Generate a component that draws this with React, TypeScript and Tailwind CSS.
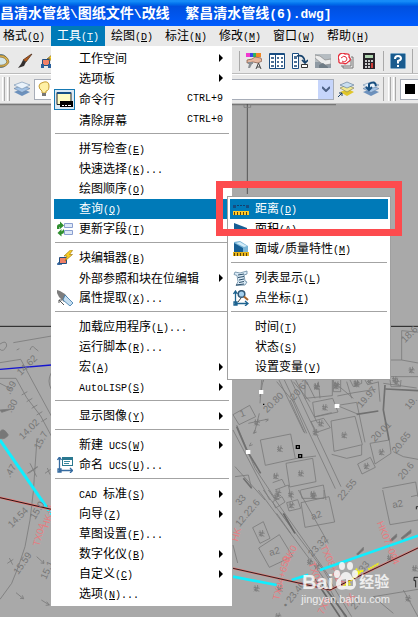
import type { ReactNode } from "react";

/** Latin runs are set in a half-width monospace face, Chinese in the CJK face. */
function Mixed({ text, latin }: { text: string; latin: string }) {
  return (
    <>
      {text.split(/([\x20-\x7e]+)/).map((run, i) =>
        /^[\x20-\x7e]+$/.test(run) ? (
          <span key={i} className={latin}>{run}</span>
        ) : (
          run
        ),
      )}
    </>
  );
}

const mono = "font-['Liberation_Mono',monospace] text-[10px]";

function Label({ text, hot, tail = "" }: { text: string; hot?: string; tail?: string }) {
  return (
    <span className="whitespace-pre">
      <Mixed text={text} latin={mono} />
      {hot && (
        <span className={mono}>
          (<u className="underline-offset-1">{hot}</u>){tail}
        </span>
      )}
    </span>
  );
}

function Icon({ children, label }: { children: ReactNode; label?: string }) {
  return (
    <svg viewBox="0 0 16 16" className="size-4 shrink-0" role={label ? "img" : undefined} aria-label={label} aria-hidden={label ? undefined : true}>
      {children}
    </svg>
  );
}

const icons: Record<string, ReactNode> = {
  field: (
    <>
      <path d="M7.500 2.500h8v4h-8zM7.500 9.500h8v4h-8z" fill="#dfe9f8" stroke="#8a9fd0" />
      <path d="M0 8V5.500q0-2.500 3-2.500V.500l4 4-4 3.500V6H2.500V8zM7 8v2.500q0 2.500-2.500 2.500v2.500L.5 12l4-4v2.500" fill="#2f8f2f" />
    </>
  ),
  block: (
    <>
      <path d="M2 12v3M0 14h5" stroke="#2a5f9a" strokeWidth="1.500" />
      <path d="M2.500 7.500h7v6h-7z" fill="#f08068" stroke="#234f80" />
      <path d="M13.500 0 7 6h3l-2 5 7.500-6.500h-3l3-4z" fill="#f8cf22" stroke="#a07818" strokeWidth=".7" />
    </>
  ),
  extract: (
    <>
      <path d="M0 0 3 1l5 3 3 4-4 4-5-5-2-4z" fill="#7d7d7d" />
      <path d="m8 5 8 8-3 3-7-6z" fill="#c5def0" stroke="#3876a8" strokeWidth=".8" />
      <path d="m7 15-5-5M2 13v-3h3" stroke="#555" fill="none" />
    </>
  ),
  ucs: (
    <>
      <path d="M5 0h11v9H5z" fill="#2a7890" />
      <path d="M6 3h9v5H6z" fill="#fff" />
      <path d="M7 4.500h6M7 6.500h5" stroke="#3b8ba0" />
      <path d="M2.500 1v12.500H15M.5 3l2-3 2 3M13 11l2.500 2.500L13 16M1 12h3v3H1z" fill="none" stroke="#356ba0" strokeWidth="1.300" />
    </>
  ),
  distance: (
    <>
      <path d="M0 4h3v3H0zM13 4h3v3h-3z" fill="#164c80" />
      <path d="M4 4.500h8" stroke="#123f6c" strokeDasharray="2 1" />
      <path d="M0 10h16v4H0z" fill="#ffc928" />
      <path d="M1.500 11v3M4.500 11v3M7.500 11v3M10.500 11v3M13.500 11v3" stroke="#5a4310" />
    </>
  ),
  area: <path d="M1 2 14 7v8H1z" fill="#165e94" />,
  mass: (
    <>
      <path d="m1 1 6-1 8 5v6l-4 1L1 9z" fill="#79b4d6" />
      <path d="m1 2 9 5v4H1z" fill="#165e94" />
      <path d="m7 1 7 4-3 1-8-4z" fill="#d2ebf8" />
      <path d="M0 11h16v4H0z" fill="#e8b51c" />
      <path d="M1.500 12v3M4.500 12v3M7.500 12v3M10.500 12v3M13.500 12v3" stroke="#58440e" />
    </>
  ),
  list: (
    <>
      <path d="m2 2 5 1 7-2v3l-3 1 1 6 2 1-2 3-9 .5 2-4-1-6-3-1z" fill="#dcecf7" stroke="#6487a0" strokeWidth=".8" />
      <path d="m5 5 6-1M5 7.500l6-1M6 10l5-1M6 12.500l5-1M3 15l8-1" stroke="#2b4d68" />
    </>
  ),
  point: (
    <>
      <path d="M2.500 2v11.500H14M.5 4l2-3 2 3M12 11l3 2.500L12 16M1 12h3v3H1z" fill="none" stroke="#1e6390" strokeWidth="1.300" />
      <circle cx="8.500" cy="4" r="3.300" fill="#a5d0ee" stroke="#345a78" strokeWidth="1.500" />
      <path d="m11 6.500 4 3.500" stroke="#a8652d" strokeWidth="2" />
      <path d="m8 8-3 4" stroke="#444" />
    </>
  ),
};

function CommandLineIcon() {
  return (
    <span className="flex size-[21px] -ml-[3px] shrink-0 items-center justify-center border border-[#1679b3] bg-[#dceaf4]">
      <svg viewBox="0 0 17 17" className="size-[17px]" aria-hidden="true">
        <path d="M1 1.500h14v12H1z" fill="#fffcc5" stroke="#222" />
        <path d="M1 1h14v2H1z" fill="#164f86" />
        <path d="M4 10h13v6H4z" fill="#000" />
        <path d="M6 14.500h2M9 14.500h2M12 14.500h3" stroke="#fff" />
      </svg>
    </span>
  );
}

type Item = { text: string; hot?: string; tail?: string; icon?: string; keys?: string; sub?: boolean; active?: boolean; checked?: boolean };

const toolGroups: Item[][] = [
  [
    { text: "工作空间", sub: true },
    { text: "选项板", sub: true },
    { text: "命令行", keys: "CTRL+9", checked: true },
    { text: "清除屏幕", keys: "CTRL+0" },
  ],
  [
    { text: "拼写检查", hot: "E" },
    { text: "快速选择", hot: "K", tail: "..." },
    { text: "绘图顺序", hot: "O" },
    { text: "查询", hot: "Q", sub: true, active: true },
    { text: "更新字段", hot: "T", icon: "field" },
  ],
  [
    { text: "块编辑器", hot: "B", icon: "block" },
    { text: "外部参照和块在位编辑", sub: true },
    { text: "属性提取", hot: "X", tail: "...", icon: "extract" },
  ],
  [
    { text: "加载应用程序", hot: "L", tail: "..." },
    { text: "运行脚本", hot: "R", tail: "..." },
    { text: "宏", hot: "A", sub: true },
    { text: "AutoLISP", hot: "S", sub: true },
  ],
  [{ text: "显示图像", hot: "Y", sub: true }],
  [
    { text: "新建 UCS", hot: "W", sub: true },
    { text: "命名 UCS", hot: "U", tail: "...", icon: "ucs" },
  ],
  [
    { text: "CAD 标准", hot: "S", sub: true },
    { text: "向导", hot: "Z", sub: true },
    { text: "草图设置", hot: "F", tail: "..." },
    { text: "数字化仪", hot: "B", sub: true },
    { text: "自定义", hot: "C", sub: true },
    { text: "选项", hot: "N", tail: "..." },
  ],
];

const inquiryGroups: Item[][] = [
  [
    { text: "距离", hot: "D", icon: "distance", active: true },
    { text: "面积", hot: "A", icon: "area" },
    { text: "面域/质量特性", hot: "M", icon: "mass" },
  ],
  [
    { text: "列表显示", hot: "L", icon: "list" },
    { text: "点坐标", hot: "I", icon: "point" },
  ],
  [
    { text: "时间", hot: "T" },
    { text: "状态", hot: "S" },
    { text: "设置变量", hot: "V" },
  ],
];

function Row({ item }: { item: Item }) {
  return (
    <button
      type="button"
      role="menuitem"
      className={`flex w-full items-center pl-[3px] pr-[7px] text-left ${item.checked ? "h-[22px]" : "h-5"} ${item.active ? "bg-[#007ab8] text-white" : "text-black"}`}
    >
      <span className="flex w-[22px] shrink-0 items-center">
        {item.checked ? <CommandLineIcon /> : item.icon ? <Icon>{icons[item.icon]}</Icon> : null}
      </span>
      <Label text={item.text} hot={item.hot} tail={item.tail} />
      {item.keys && <span className={`ml-auto ${mono}`}>{item.keys}</span>}
      {item.sub && (
        <svg viewBox="0 0 4 8" className="ml-auto h-2 w-1" aria-hidden="true">
          <path d="M0 0v8l4-4z" fill="currentColor" />
        </svg>
      )}
    </button>
  );
}

function Groups({ groups }: { groups: Item[][] }) {
  return (
    <>
      {groups.map((group, i) => (
        <div key={i}>
          {i > 0 && <hr className="mx-px mt-[3px] mb-[5px] border-[#a3a3a3]" />}
          {group.map((item) => (
            <Row key={item.text} item={item} />
          ))}
        </div>
      ))}
    </>
  );
}

const menuTitles = [
  ["格式", "O"],
  ["工具", "T"],
  ["绘图", "D"],
  ["标注", "N"],
  ["修改", "M"],
  ["窗口", "W"],
  ["帮助", "H"],
];

function MenuBar() {
  return (
    <nav className="-ml-[3px] flex h-5 bg-[#e9e9e9]" role="menubar">
      {menuTitles.map(([text, hot]) => (
        <div key={text} className="relative">
          <button type="button" role="menuitem" className={`flex h-5 w-[54px] items-center pl-1.5 ${hot === "T" ? "bg-[#007ab8] text-white" : ""}`}>
            <Label text={text} hot={hot} />
          </button>
          {hot === "T" && (
            <div role="menu" aria-label="工具" className="absolute top-full left-0 z-10 w-[181px] bg-white py-0.5 pr-0.5 pl-[3px]">
              <Groups groups={toolGroups} />
              <div role="menu" aria-label="查询" className="absolute top-[150px] left-[176px] w-[164px] border border-[#a0a0a0] bg-white p-0.5">
                <Groups groups={inquiryGroups} />
                <div className="pointer-events-none absolute -top-4 -left-3 h-[55px] w-[186px] border-[7px] border-[#fd4b4e]" />
              </div>
            </div>
          )}
        </div>
      ))}
    </nav>
  );
}

const layers = (
  <>
    <path d="m0 11 8-3 8 3-8 4z" fill="#6c91bd" />
    <path d="m0 7.500 8-3 8 3-8 4z" fill="#a4c3e6" stroke="#64809f" strokeWidth=".6" />
    <path d="m0 4 8-3 8 3-8 4z" fill="#eaf3fb" stroke="#6c8cad" strokeWidth=".6" />
  </>
);

function ToolButton({ label, children }: { label: string; children: ReactNode }) {
  return (
    <button type="button" aria-label={label} className="shrink-0">
      <Icon>{children}</Icon>
    </button>
  );
}

function Grip() {
  return (
    <span className="flex gap-0.5">
      <i className="h-6 w-[3px] border-x border-l-white border-r-[#a9a9a9]" />
      <i className="h-6 w-[3px] border-x border-l-white border-r-[#a9a9a9]" />
    </span>
  );
}

function StandardBar() {
  return (
    <div className="flex h-7 items-center overflow-hidden border-t border-white bg-[#e9e9e9] shadow-[inset_0_-1px_0_#bcbcbc]">
      <div className="-ml-1.5 flex w-[245px] shrink-0 items-center gap-[7px]">
        <ToolButton label="浏览">
          <circle cx="7" cy="8" r="6.500" fill="#d5e6e8" stroke="#66849c" />
          <path d="M5 2q9 0 10 7-2 5-9 5l-2-2q7 1 9-3-1-5-8-5z" fill="#e0b44c" stroke="#6d5623" strokeWidth=".6" />
        </ToolButton>
        <ToolButton label="特性匹配">
          <path d="m15 1-6 8-3-2 7-5z" fill="#b35b1e" stroke="#432715" strokeWidth=".7" />
          <path d="m6 7 3 2-2 4-6 2 3-4z" fill="#34302f" />
        </ToolButton>
        <ToolButton label="块编辑器">
          <path d="M2.500 6.500h7v6h-7z" fill="#f08068" stroke="#234f80" />
          <path d="M1 11h3v4H1zM8 11h3v4H8z" fill="#2a5f9a" />
          <path d="m14 0-7 6 3-1-1 3 6-4z" fill="#f8cf22" stroke="#775b1a" strokeWidth=".7" />
        </ToolButton>
      </div>
      <i className="mr-1.5 h-5 w-px shrink-0 bg-[#a9a9a9]" />
      <div className="flex shrink-0 items-center gap-[7px]">
        <ToolButton label="特性">
          <path d="M0 0h4v4H0z" fill="#f03ad0" />
          <path d="M4 0h3v4H4z" fill="#3c46e8" />
          <path d="M7 0h3v4H7z" fill="#2ab560" />
          <path d="M10 0h5v4h-5z" fill="#ef8826" />
          <path d="m1 7 5-1 3-2 6 1 1 3-4 2-5-1-6 1z" fill="#e5b7a0" stroke="#7d5444" strokeWidth=".7" />
          <path d="M2 9h5v2H2zM3 11h3l-2 4H2z" fill="#8b8f94" />
          <path d="m10 16 2.500-6 2.500 6M11 14h3" fill="none" stroke="#444" />
        </ToolButton>
        <ToolButton label="设计中心">
          <path d="M.5.500h15v15H.5z" fill="#fff" stroke="#194c80" />
          <path d="M6.500 1v14M1 1.500h14" stroke="#194c80" />
          <path d="M2 4h3v2H2zM2 8h3v2H2zM2 12h3v2H2zM8 4h2v2H8zM12 4h2v2h-2zM8 8h2v2H8zM12 8h2v2h-2zM8 12h2v2H8zM12 12h2v2h-2z" fill="#4e7095" />
        </ToolButton>
        <ToolButton label="工具选项板">
          <path d="M.5.500h6v15h-6z" fill="#fff" stroke="#194c80" />
          <path d="M2 3h3v3H2zM2 8h3v2H2zM2 12h3v2H2z" fill="#4e7095" />
          <path d="M5 3q7-2 8 6m-3-2 3 3 3-3" fill="none" stroke="#16426c" strokeWidth="1.600" />
          <path d="M9.500 11.500h6v3h-6z" fill="#fff" stroke="#333" />
        </ToolButton>
        <ToolButton label="图纸集">
          <path d="M0 1h16v14H0z" fill="#b5bcc1" />
          <path d="M0 9h16v6H0z" fill="#8f9aa4" />
          <path d="m0 2 5 1 5 4 6-1v5l-6 1-4-2-6-5z" fill="#ececec" stroke="#888" strokeWidth=".7" />
          <path d="m4 12 4-2 5 4v1H4z" fill="#6f7c86" />
        </ToolButton>
        <ToolButton label="标记集">
          <path d="M13 4h2v11H5v-2M11 6h2v7H3" fill="none" stroke="#777" />
          <path d="M2 1q3-2 5 0 5-1 4 3 3 3-1 5-2 3-5 1-5 1-4-3-2-3 1-6z" fill="#fff" stroke="#e52e3b" strokeWidth="1.300" />
          <path d="M3 5q3-3 5-1t0 4-4 0" fill="none" stroke="#e52e3b" />
        </ToolButton>
        <ToolButton label="计算器">
          <path d="M2 0h12v16H2z" fill="#27242a" />
          <path d="M4 2h8v3H4z" fill="#afd4af" />
          <path d="M4 8h8M4 11h8M4 14h8" stroke="#fff" strokeWidth="1.500" strokeDasharray="2 1" />
          <path d="M10 10h2v5h-2z" fill="#ce3c38" />
        </ToolButton>
      </div>
      <i className="mx-1.5 h-5 w-px shrink-0 bg-[#a9a9a9]" />
      <ToolButton label="帮助">
        <rect x=".5" y=".5" width="15" height="15" rx="1" fill="#195b8e" stroke="#7ba7c7" />
        <path d="M5 6q0-3 3-3t3 2.500Q11 7 8 8v2.500M8 12v2" fill="none" stroke="#fff" strokeWidth="2" />
      </ToolButton>
      <i className="ml-1.5 h-6 w-px shrink-0 bg-[#a9a9a9]" />
    </div>
  );
}

function LayerBar() {
  return (
    <div className="flex h-[30px] items-center overflow-hidden border-t border-b border-t-white border-b-[#bcbcbc] bg-[#e9e9e9] pl-0.5">
      <Grip />
      <div className="ml-1 flex shrink-0 items-center gap-1">
        <ToolButton label="图层特性">{layers}</ToolButton>
        <div className="relative w-[300px]">
          <select aria-label="图层" className="block h-[21px] w-full appearance-none border border-[#a7adb8] bg-white pl-5">
            <option></option>
          </select>
          <svg viewBox="0 0 12 16" className="pointer-events-none absolute top-0.5 left-1 h-4 w-3" aria-hidden="true">
            <path d="M4 10Q1 8 1 5t5-4 5 4-3 5v2H4z" fill="#fff1a5" stroke="#c49b31" />
            <path d="M4 12h4v3H4z" fill="#777" />
          </svg>
          <span className="pointer-events-none absolute top-px right-px flex h-[19px] w-[15px] items-center justify-center bg-[#c6d5fb]">
            <svg viewBox="0 0 8 6" className="h-1.5 w-2" aria-hidden="true">
              <path d="m0 1 4 4 4-4" fill="none" stroke="#4d6185" strokeWidth="2" />
            </svg>
          </span>
        </div>
        <ToolButton label="置为当前图层">
          <path d="m2 11 8-3 6 3-7 4z" fill="#e0c62b" />
          <path d="m2 7 7-3 7 3-7 4z" fill="#f1e891" stroke="#7a7750" strokeWidth=".6" />
          <path d="m2 4 7-3 7 3-7 3z" fill="#c9def0" stroke="#587491" strokeWidth=".6" />
          <path d="m0 16 4-4M1 12h3v3" fill="none" stroke="#183f69" />
        </ToolButton>
        <span className="w-px" />
        <ToolButton label="上一个图层">
          {layers}
          <path d="M13 5q-1-6-7-2v5M3 6l3 3 3-3" fill="none" stroke="#184f80" strokeWidth="2" />
        </ToolButton>
      </div>
      <i className="mx-1 h-6 w-px shrink-0 bg-[#a9a9a9]" />
      <Grip />
      <button type="button" aria-label="颜色" className="ml-1 flex h-[21px] flex-1 items-center border border-r-0 border-[#a7adb8] bg-white pl-1">
        <i className="size-2.5 bg-black" />
      </button>
    </div>
  );
}

type Mark = [x: number, y: number, angle: number, text: string];

function Marks({ marks, className }: { marks: Mark[]; className: string }) {
  return (
    <g className={className} stroke="none">
      {marks.map(([x, y, angle, text], i) => (
        <text key={i} transform={`translate(${x} ${y}) rotate(${angle})`}>{text}</text>
      ))}
    </g>
  );
}

/* Survey symbol standing for a building. */
function House({ x, y }: { x: number; y: number }) {
  return <path d={`M${x - 9} ${y - 3}l18 3m-14-9l2 18m6-19l-3 20m-9-8l17 7m-2-14l-14 14`} />;
}

const grey = "fill-[#777] text-[29px] font-['Liberation_Sans',sans-serif]";
const pink = "fill-[#e77b80] text-[29px] font-['Liberation_Sans',sans-serif]";

/* Site plan drawn in thirds of a pixel. */
function SitePlan() {
  return (
    <svg viewBox="0 312 1254 1539" preserveAspectRatio="xMinYMin slice" className="absolute inset-0 size-full" role="img" aria-label="管线图">
      <g fill="none" stroke="#7b7b7b" strokeWidth="2.500">
        <path d="M0 313h1008" stroke="#777" strokeWidth="6" />
        <path d="M742 312v270" stroke="#444" />
        <path d="M732 312v10h20v-10" />
        <path d="M0 979h156M1170 979h84" stroke="#000" />

        <g transform="translate(0 1050)">
          <path d="M0 38 62 28l92 170M0 85h48l32 58 42 55 32 60M111 265l-11 160-10 85-15 80-20 60-20 50-35 48M0 100l35 18M65 135l17-10M80 155l17-10M95 175l17-10M110 195l17-10M124 215l17-10M154 68q-14 25 0 50M40-22l115-20M0-18q20-14 20 6-10 20-20 10M50 0l8-4M90 0q5-18 15-5l10 8" />
          <path d="m110 620 22 20m-2-10 2 10-10-1M48 728l22 18m-3-10 4 10-11-1M124 750l24 15m-8-10 8 10-11 1M82 370l30-20m-22-10 20 40m-24-10 28-20M22 640l18-12m-12-4 10 20M135 370l17-12m-10-4 8 20" />
          <path d="M0 245q10-15 25 10-10 15-25 10zM0 180l35-3-30 10z" fill="#777" />
          <path d="M0 58 154 45" stroke="#1515d0" strokeWidth="4" />
          <path d="m0 270 154 222" stroke="#10efff" strokeWidth="9" />
          <path d="m0 443 154 35" stroke="#ed7773" strokeWidth="7" />
          <path d="m0 443 154 35" stroke="#000" />
          <Marks className={grey} marks={[[62, 78, -45, "14.62"], [68, 270, -45, "14.02"], [118, 300, -62, "15.7"], [35, 535, -45, "14.54"], [55, 675, -55, "15.59"], [105, 510, -58, "15.0"], [138, 690, -65, "15.1"], [30, 385, -60, ".47"], [30, 135, -60, ".69"], [34, 190, -60, ".30"]]} />
          <Marks className={pink} marks={[[118, 590, -75, "TX04"], [145, 535, -75, "HK+1"]]} />
        </g>

        <g transform="translate(630 780)">
          <path d="M540 350v-50h35v-88l55 5M575 300l55 10M540 350h90M200 365l50 60M250 365l50 60M290 365l25 50M325 365l5 50M370 365l60 50M410 365l15 50M505 365l5 60M150 410q15-80 10-45" />
          <House x={605} y={330} />
          <House x={555} y={358} />
          <House x={320} y={378} />
          <House x={378} y={378} />
          <House x={440} y={372} />
          <Marks className={grey} marks={[[585, 250, -45, "18.6"]]} />
        </g>

        <g transform="translate(675 1140)">
          <path d="m162 0 75 157M178 0l153 326M198 0l150 320M212 0l66 130M195 60l45 100M200 55l45 105" />
          <path d="m106 180 91-18 14 74-90 20zM183 250l80-15 10 70-79 16zM211 236l62-8M24 104l50-28 18 34-50 24zM35 135l55 130 60 90M24 150l110 210M30 260l90 100" />
          <path d="m240 55 82-8V0M240 55V0M263 67l60-12 16 41-70 15zM270 110l50-12M258 125l38-10 20 28-41 14zM318 123l72-14 22 85-85 20zM345 75l50-8 25 120M320 223l45 12 45-10v-30M337 48l50-10 65-10M475 10l100 14M435 190l58-10 5 40-48 32zM398 252l38-20 15 30-40 20zM505 215l30 15 44 8M472 325l100-19 7 45M227 330l68-15 8 45M150 330l40-15 10 45M143 308l28-10 10 20M30 290l40-5 10 40M110 0l-5 70M70 130l60-13M88 160l15-60" />
          <path d="M395 103l65-10M480 15l-5 75 17 90M482 27l97 5M35 140l30 70 42 70M55 295l25 30" stroke="#707070" strokeWidth="5" />
          <path d="M340 78l60 25M120 118l10 2-8 5M90 150l-5 10 10-4M78 188l-5 10 10-4" />
          <path d="M325 0v35h22V0M375 0l10 20 25-10V0M420 0l8 14 32-8M495 0l3 20h28l2-20" />
          {[[276, 20], [336, 14], [395, 8], [435, 2], [300, 82], [288, 130], [272, 157], [358, 165], [165, 206], [228, 280], [470, 216], [425, 258], [153, 288], [160, 338], [198, 343], [267, 348], [515, 5], [96, 127]].map(([x, y]) => (
            <House key={`${x}-${y}`} x={x} y={y} />
          ))}
          <path d="M214 197h9v8h-9zM221 224h9v8h-9z" stroke="#000" strokeWidth="4" />
          <path d="M102 30h13v12h-13zM63 210h13v12H63zM329 72h14v12h-14z" fill="#fff" stroke="none" />
          <path d="M114 71h4v4h-4z" fill="#000" stroke="none" />
          <Marks className={grey} marks={[[126, 100, -45, "20.80"], [208, 62, -50, "20.67"], [409, 85, -50, "19.97"], [449, 187, -45, "20.01"], [514, 222, -52, "20.65"], [532, 300, -50, "20.6"], [350, 363, -50, "22.55"], [552, 90, -50, "19."], [48, 112, -20, "1"]]} />
        </g>

        <g transform="translate(675 1470)">
          <path d="m100 0 200 270 60 111M115 0l180 240 85 140M130 0l190 270M165 65l45 65M155 70l42 60M220 0l90 160" />
          <path d="m228 38 84-18 17 76-89 16zM185 38l33-9 9 26-35 8zM83 113l32-18 20 50-30 15zM101 174l62-40 40 65-70 33zM473 0l22 104 84-14M558 20l21-5M225 0l6 25h66V0M24 165l14 54M445 320l60 50M535 300l44 80M445 320l134-22M143 35l28-15 9 16-28 18z" />
          <path d="M175 70l35 60M265 260l80 121M290 280l75 101" stroke="#686868" strokeWidth="5" />
          {[[200, 45], [264, 12], [110, 130], [155, 20], [95, 295], [165, 295], [255, 215], [278, 228], [495, 203], [570, 235], [550, 325], [160, 378]].map(([x, y]) => (
            <House key={`${x}-${y}`} x={x} y={y} />
          ))}
          <path d="m395 192 20-20v9l-17 14zM495 150l20-18v9l-17 15zM528 144l30-25v10l-27 19z" fill="#727272" />
          <Marks className={grey} marks={[[262, 202, -48, "23.32"], [186, 355, -52, "• 23.40"], [44, 112, -50, "12.22.6"], [44, 48, -50, "33"], [262, 90, -20, "a2"], [135, 198, -15, "a2"], [504, 55, -12, "a2"], [390, 360, -50, "27"], [414, 248, -50, "33"]]} />
          <Marks className={pink} marks={[[38, 155, -75, "HK"], [162, 332, -76, "TX04+650"], [190, 220, -60, "BK0"], [285, 170, 65, "TX08+920"], [455, 98, 68, "HK07+094"], [250, 220, 70, "TX05"], [370, 350, -55, "XK"], [295, 375, -65, "7X5"]]} />
          <path d="m24 260 131 25M200 270l50-16M285 240l294-103" stroke="#10efff" strokeWidth="8" />
          <path d="m24 235 291 65 264-126" stroke="#e87774" strokeWidth="6" />
          <path d="m24 235 291 65 264-126M579 50h-5v8M579 262h-12v10h5v20" stroke="#101010" />
          <path d="m355 290 35-30 20-18M390 247l25-5M430 238l32-18M365 285l13-3M393 236l10 14" stroke="#f4f113" strokeWidth="6" strokeDasharray="5 2" />
        </g>
      </g>
    </svg>
  );
}

function Watermark() {
  return (
    <div className="absolute right-7 bottom-3 flex flex-col items-center text-white/80">
      <div className="flex h-[22px] items-center font-['Liberation_Sans','Noto_Sans_CJK_SC',sans-serif] font-bold">
        <span className="text-xl leading-5">Bai</span>
        <svg viewBox="0 0 26 30" className="-mt-3 h-[30px] w-[26px]" fill="currentColor" aria-hidden="true">
          <ellipse cx="4" cy="13" rx="3" ry="4" />
          <ellipse cx="9" cy="5" rx="3" ry="4" />
          <ellipse cx="17" cy="5" rx="3" ry="4" />
          <ellipse cx="22" cy="13" rx="3" ry="4" />
          <path fillRule="evenodd" d="M13 11q4 0 6 5 6 5 3 10-2 4-9 2-7 2-9-2-3-5 3-10 2-5 6-5zM8 19v6h5v-7zm7 0v6h5v-6z" />
        </svg>
        <span className="text-[15px] leading-5">经验</span>
      </div>
      <span className="font-['Liberation_Sans',sans-serif] text-[11px] leading-3">jingyan.baidu.com</span>
    </div>
  );
}

export default function App() {
  return (
    <main className="flex min-h-screen flex-col overflow-hidden bg-[#e9e9e9] font-['Noto_Sans_CJK_SC',sans-serif] text-xs text-black">
      <header className="flex h-[26px] items-center overflow-hidden bg-linear-to-b from-[#168cf8] from-5% via-[#0050df] via-25% to-[#005cfe]">
        <h1 className="text-sm font-bold whitespace-pre text-white">
          <Mixed text={"昌清水管线\\图纸文件\\改线  繁昌清水管线(6).dwg]"} latin="font-['Liberation_Mono',monospace] text-[13px]" />
        </h1>
      </header>
      <MenuBar />
      <StandardBar />
      <LayerBar />
      <section className="relative flex-1 overflow-hidden bg-[#a9a9a9]">
        <SitePlan />
        <Watermark />
      </section>
    </main>
  );
}
